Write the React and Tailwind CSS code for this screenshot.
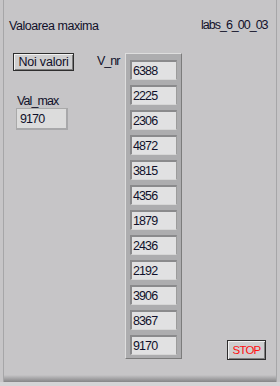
import React from "react";

const values = ["6388", "2225", "2306", "4872", "3815", "4356", "1879", "2436", "2192", "3906", "8367", "9170"];

export default function App() {
  return (
    <div
      className="w-[280px] h-[386px] bg-[#c6c5c7] overflow-hidden text-[12.5px] leading-[14px] text-[#10102a]"
      style={{ fontFamily: '"Liberation Sans", Arial, sans-serif' }}
    >
      <div className="ml-[3px] w-[274px] h-[382px] border-l border-r border-[#a6a6a8] flex flex-col">
        {/* header */}
        <div className="h-[53px] flex items-start">
          <div className="ml-[5px] w-[192px] mt-[19px] tracking-[-0.45px]">Valoarea maxima</div>
          <div className="mt-[17.5px] tracking-[-1px]">labs_6_00_03</div>
        </div>
        {/* body */}
        <div className="flex items-start -ml-[1px]">
          <div className="ml-[10px] w-[61px] flex flex-col">
            <div className="h-[18px] w-[61px] border border-[#2e2e2e] bg-[#cfcfd0] shadow-[inset_1px_1px_0_#f2f2f2,inset_-1px_-1px_0_#7e7e7e] flex items-center justify-center tracking-[-0.2px]">
              Noi valori
            </div>
            <div className="mt-[23px] ml-[4px] tracking-[-0.9px]">Val_max</div>
            <div className="ml-[3px] w-[52px] h-[22px] bg-[#dcdcdc] border-t border-l border-[#a9a9a9] border-r-2 border-b-2 border-r-[#a8a8aa] border-b-[#a8a8aa] flex items-center pl-[3px] tracking-[-0.9px]">
              9170
            </div>
          </div>
          <div className="ml-[23px] w-[28px] mt-[1px] tracking-[-1px]">V_nr</div>
          <div className="w-[57px] h-[306px] bg-[#adadaf] border-t border-l border-[#dedede] border-r border-b border-r-[#7c7c7c] border-b-[#7c7c7c] pt-[6px] px-[4px] flex flex-col gap-[5px]">
            {values.map((v, i) => (
              <div
                key={i}
                className="h-[20px] w-[47px] bg-[#e1e1e2] border-t-2 border-l-2 border-[#8a8a8c] border-b border-r border-b-[#d6d6d6] border-r-[#9c9c9c] flex items-center pl-[1px] tracking-[-0.9px]"
              >
                {v}
              </div>
            ))}
          </div>
          <div className="ml-[45px] mt-[287px] w-[39px] h-[20px] border border-[#2e2e2e] bg-[#cfcfd0] shadow-[inset_1px_1px_0_#f2f2f2,inset_-1px_-1px_0_#7e7e7e] flex items-center justify-center text-[#ff1010] text-[11.5px] tracking-[-0.8px]">
            STOP
          </div>
        </div>
        <div className="mt-auto h-[7px] bg-gradient-to-b from-[#c6c5c7] to-[#858587]"></div>
      </div>
      <div className="h-[4px] bg-[#d4d4d6]"></div>
    </div>
  );
}
